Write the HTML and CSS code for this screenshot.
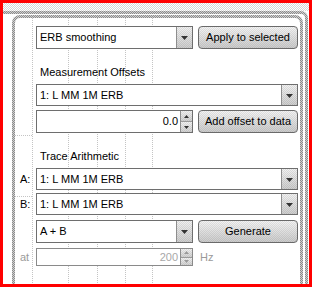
FILE: index.html
```html
<!DOCTYPE html>
<html>
<head>
<meta charset="utf-8">
<link rel="stylesheet" href="styles.css">
</head>
<body>
<div class="frame">
  <div class="topstrip"></div>
  <div class="outer">
    <div class="panel">
      <div class="row h23">
        <span class="tag"></span>
        <div class="combo half"><span class="val">ERB smoothing</span><span class="drop"><svg width="7" height="4" viewBox="0 0 7 4"><path d="M0 0H7L3.5 4Z"/></svg></span></div>
        <div class="btn">Apply to selected</div>
      </div>
      <div class="heading h-meas">Measurement Offsets</div>
      <div class="row h22 g5">
        <span class="tag"></span>
        <div class="combo full"><span class="val">1: L MM 1M ERB</span><span class="drop"><svg width="7" height="4" viewBox="0 0 7 4"><path d="M0 0H7L3.5 4Z"/></svg></span></div>
      </div>
      <div class="row h23 g4">
        <span class="tag"></span>
        <div class="spin half"><span class="num">0.0</span><span class="arrows"><span class="up"><svg width="5" height="3" viewBox="0 0 5 3"><path d="M2.5 0L5 3H0Z"/></svg></span><span class="down"><svg width="5" height="3" viewBox="0 0 5 3"><path d="M0 0H5L2.5 3Z"/></svg></span></span></div>
        <div class="btn">Add offset to data</div>
      </div>
      <div class="heading h-trace">Trace Arithmetic</div>
      <div class="row h22 g5">
        <span class="tag">A:</span>
        <div class="combo full"><span class="val">1: L MM 1M ERB</span><span class="drop"><svg width="7" height="4" viewBox="0 0 7 4"><path d="M0 0H7L3.5 4Z"/></svg></span></div>
      </div>
      <div class="row h22 g3">
        <span class="tag">B:</span>
        <div class="combo full"><span class="val">1: L MM 1M ERB</span><span class="drop"><svg width="7" height="4" viewBox="0 0 7 4"><path d="M0 0H7L3.5 4Z"/></svg></span></div>
      </div>
      <div class="row h23 g5">
        <span class="tag"></span>
        <div class="combo half"><span class="val">A + B</span><span class="drop"><svg width="7" height="4" viewBox="0 0 7 4"><path d="M0 0H7L3.5 4Z"/></svg></span></div>
        <div class="btn">Generate</div>
      </div>
      <div class="row h18 g5">
        <span class="tag muted">at</span>
        <div class="spin half disabled"><span class="num">200</span><span class="arrows"><span class="up"><svg width="5" height="3" viewBox="0 0 5 3"><path d="M2.5 0L5 3H0Z"/></svg></span><span class="down"><svg width="5" height="3" viewBox="0 0 5 3"><path d="M0 0H5L2.5 3Z"/></svg></span></span></div>
        <span class="unit">Hz</span>
      </div>
    </div>
  </div>
</div>
</body>
</html>
```
FILE: styles.css
```css
html, body {
  margin: 0;
  padding: 0;
  background: #fff;
}

.frame {
  box-sizing: border-box;
  width: 312px;
  height: 287px;
  border: 3px solid #ff0000;
  overflow: hidden;
  background: #fff;
  font-family: "Liberation Sans", Arial, sans-serif;
  font-size: 11px;
  line-height: 13px;
  color: #000;
}

.topstrip {
  height: 8px;
  background: repeating-conic-gradient(#d6d6d6 0 25%, #ffffff 0 50%) 0 0 / 2px 2px;
}

.outer {
  margin-right: 1px;
  height: 300px;
  padding: 1px 2px 0 9px;
  border-top: 3px solid transparent;
  border-right: 3px solid transparent;
  border-top-right-radius: 7px;
  background:
    linear-gradient(#fff, #fff) padding-box,
    repeating-conic-gradient(#8c8c8c 0 25%, #d0d0d0 0 50%) 0 0 / 2px 2px border-box;
}

.panel {
  height: 290px;
  padding: 8px 2px 0 0;
  border: 3px solid transparent;
  border-bottom: 0;
  border-radius: 8px 8px 0 0;
  background-image:
    linear-gradient(#c4c4c4 50%, transparent 50%),
    linear-gradient(#c4c4c4 50%, transparent 50%),
    linear-gradient(#c4c4c4 50%, transparent 50%),
    linear-gradient(#c4c4c4 50%, transparent 50%),
    linear-gradient(#c4c4c4 50%, transparent 50%),
    repeating-linear-gradient(to right, #c4c4c4 0 1px, transparent 1px 2px),
    repeating-linear-gradient(to right, #c4c4c4 0 1px, transparent 1px 2px),
    linear-gradient(#fff, #fff),
    repeating-conic-gradient(#8c8c8c 0 25%, #d0d0d0 0 50%);
  background-size: 1px 2px, 1px 2px, 1px 2px, 1px 2px, 1px 2px, 18px 1px, 18px 1px, auto, 2px 2px;
  background-repeat: repeat-y, repeat-y, repeat-y, repeat-y, repeat-y, no-repeat, no-repeat, no-repeat, repeat;
  background-position: 17px 0, 53px 0, 82px 0, 110px 0, 137px 0, 0 117px, 0 178px, 0 0, 0 0;
  background-origin: padding-box, padding-box, padding-box, padding-box, padding-box, padding-box, padding-box, padding-box, border-box;
  background-clip: padding-box, padding-box, padding-box, padding-box, padding-box, padding-box, padding-box, padding-box, border-box;
}

.row {
  display: flex;
  align-items: center;
}
.h23 { height: 23px; }
.h22 { height: 22px; }
.h18 { height: 18px; }
.g3 { margin-top: 3px; }
.g4 { margin-top: 4px; }
.g5 { margin-top: 5px; }

.tag {
  box-sizing: border-box;
  width: 21px;
  flex: none;
  padding-left: 5px;
}
.muted { color: #9a9a9a; }

.heading {
  padding-left: 25px;
  height: 13px;
}
.h-meas { margin-top: 17px; }
.h-trace { margin-top: 17px; }

.combo, .spin {
  box-sizing: border-box;
  height: 100%;
  display: flex;
  border: 1px solid #6e6e6e;
  background: #fff;
}
.half { width: 157px; flex: none; }
.full { width: 262px; flex: none; }

.val {
  flex: 1;
  padding-left: 3px;
  align-self: center;
  white-space: nowrap;
}

.drop {
  width: 15px;
  flex: none;
  border-left: 1px solid #8e8e8e;
  display: flex;
  align-items: center;
  justify-content: center;
  background:
    repeating-conic-gradient(rgba(0,0,0,0.09) 0 25%, transparent 0 50%) 0 0 / 2px 2px,
    linear-gradient(#f2f2f2, #cfcfcf);
}
.drop svg { fill: #333; display: block; margin-top: 1px; }

.btn {
  box-sizing: border-box;
  width: 100px;
  height: 100%;
  margin-left: 5px;
  flex: none;
  border: 1px solid #6a6a6a;
  border-radius: 4px;
  display: flex;
  align-items: center;
  justify-content: center;
  white-space: nowrap;
  background:
    repeating-conic-gradient(rgba(0,0,0,0.08) 0 25%, transparent 0 50%) 0 0 / 2px 2px,
    linear-gradient(#f4f4f4, #cccccc);
}

.num {
  flex: 1;
  text-align: right;
  padding-right: 2px;
  align-self: center;
}

.arrows {
  width: 11px;
  flex: none;
  border-left: 1px solid #8e8e8e;
  display: flex;
  flex-direction: column;
}
.arrows .up, .arrows .down {
  flex: 1;
  display: flex;
  align-items: center;
  justify-content: center;
  background:
    repeating-conic-gradient(rgba(0,0,0,0.08) 0 25%, transparent 0 50%) 0 0 / 2px 2px,
    linear-gradient(#f2f2f2, #d2d2d2);
}
.arrows .up { border-bottom: 1px solid #9a9a9a; }
.arrows svg { fill: #333; display: block; }

.disabled { border-color: #8a8a8a; }
.disabled .num { color: #a8a8a8; }
.disabled .arrows svg { fill: #9a9a9a; }

.unit {
  margin-left: 7px;
  color: #9a9a9a;
}
```
